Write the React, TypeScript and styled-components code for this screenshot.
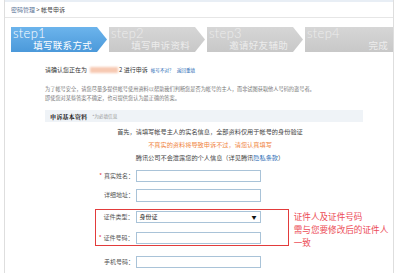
import styled, { createGlobalStyle } from "styled-components";

const GlobalStyle = createGlobalStyle`
  html, body {
    margin: 0;
    padding: 0;
    background: #fff;
  }
  body {
    width: 400px;
    height: 273px;
    overflow: hidden;
    font-family: "Noto Sans CJK SC", "Liberation Sans", sans-serif;
    color: #333;
  }
`;

const Frame = styled.div`
  margin-left: 4px;
  width: 388px;
  height: 273px;
  border-left: 1px solid #dedede;
  border-right: 1px solid #dedede;
  display: flex;
  flex-direction: column;
`;

const TopBar = styled.div`
  height: 2px;
  background: #e8eef5;
`;

const Breadcrumb = styled.div`
  height: 15px;
  line-height: 15px;
  padding-left: 6px;
  font-size: 6px;
  color: #444;
  border-bottom: 1px solid #e6e6e6;
`;

const Crumb = styled.span`
  color: #5a7397;
`;

const Steps = styled.div`
  display: flex;
  gap: 2px;
  margin-top: 9px;
  padding-left: 6px;
`;

const Step = styled.div<{ $active?: boolean; $last?: boolean }>`
  box-sizing: border-box;
  width: ${(p) => (p.$last ? 88 : 96)}px;
  height: 25px;
  padding: 0 ${(p) => (p.$last ? 5 : 15)}px 1px 2px;
  display: flex;
  flex-direction: column;
  background: ${(p) =>
    p.$active
      ? "linear-gradient(#6cb4ec, #4b99da)"
      : "linear-gradient(#d6d6d6, #c8c8c8)"};
  clip-path: ${(p) =>
    p.$last
      ? "none"
      : "polygon(0 0, calc(100% - 10px) 0, 100% 50%, calc(100% - 10px) 100%, 0 100%)"};
  color: ${(p) => (p.$active ? "#fff" : "#ececec")};
`;

const StepNum = styled.div`
  font-family: Lato, "Liberation Sans", sans-serif;
  font-weight: 300;
  font-size: 13px;
  line-height: 13px;
  letter-spacing: 0.3px;
`;

const StepLabel = styled.div`
  margin-top: auto;
  align-self: flex-end;
  font-size: 9.5px;
  line-height: 11px;
  letter-spacing: 0.3px;
`;

const Content = styled.div`
  padding-left: 40px;
  display: flex;
  flex-direction: column;
`;

const Confirm = styled.div`
  margin-top: 14px;
  font-size: 6px;
  line-height: 8px;
  color: #333;
  display: flex;
  align-items: center;
`;

const Masked = styled.span`
  display: inline-block;
  width: 28px;
  height: 6px;
  margin: 0 1px 0 3px;
  background: #f7c9b2;
  filter: blur(1px);
`;

const SmallLink = styled.a`
  font-size: 4.6px;
  color: #2c6db5;
  margin-left: 3px;
  text-decoration: none;
`;

const Para = styled.p`
  margin: 9.5px 0 0;
  width: 276px;
  font-size: 5.2px;
  line-height: 9px;
  color: #777;
`;

const SectionHead = styled.div`
  margin-top: 8.5px;
  width: 318px;
  height: 12px;
  background: #eff3f7;
  display: flex;
  align-items: center;
  padding-left: 5px;
  box-sizing: border-box;
`;

const SectionTitle = styled.span`
  font-family: "Noto Serif CJK SC", "Noto Sans CJK SC", serif;
  font-weight: 700;
  font-size: 6.2px;
  color: #222;
`;

const Required = styled.span`
  font-size: 4.6px;
  color: #999;
  margin-left: 5px;
`;

const Notices = styled.div`
  margin-top: 2.5px;
  width: 330px;
  display: flex;
  flex-direction: column;
  align-items: center;
`;

const Notice = styled.div<{ $tone?: "warn" }>`
  font-size: 6.2px;
  line-height: 13px;
  color: ${(p) => (p.$tone === "warn" ? "#f08440" : "#444")};
`;

const Link = styled.span`
  color: #2c6db5;
`;

const Form = styled.div`
  margin-top: 6px;
  display: flex;
  flex-direction: column;
  gap: 7px;
`;

const Field = styled.div<{ $labelWidth: number }>`
  display: flex;
  align-items: center;
  height: 12.5px;
  & > label {
    width: ${(p) => p.$labelWidth}px;
  }
`;

const Label = styled.label`
  box-sizing: border-box;
  padding-right: 2px;
  text-align: right;
  font-size: 6px;
  line-height: 8px;
  color: #555;
  white-space: nowrap;
`;

const Star = styled.span`
  color: #e4393c;
  margin-right: 2px;
`;

const Input = styled.div`
  box-sizing: border-box;
  width: 125px;
  height: 12.5px;
  border: 1px solid #a9c3d8;
  background: #fff;
`;

const Select = styled(Input)`
  display: flex;
  align-items: center;
  justify-content: space-between;
  padding: 0 3px 0 3px;
  font-size: 6px;
  color: #222;
`;

const Caret = styled.span`
  font-size: 5px;
  color: #111;
`;

const HighlightRow = styled.div`
  display: flex;
  align-items: flex-start;
  margin-left: 50px;
`;

const HighlightBox = styled.div`
  box-sizing: border-box;
  width: 195px;
  padding: 1px 0 1px;
  border: 1.5px solid #e23b3b;
  display: flex;
  flex-direction: column;
  gap: 8.5px;
`;

const Annotation = styled.div`
  margin-left: 5px;
  margin-top: 1px;
  font-size: 8.6px;
  line-height: 13px;
  color: #ec4a55;
  width: 100px;
`;

const fields = {
  plainLabel: 91,
  boxLabel: 39.5,
};

export default function App() {
  return (
    <>
      <GlobalStyle />
      <Frame>
        <TopBar />
        <Breadcrumb>
          <Crumb>密码管理</Crumb> &gt; 帐号申诉
        </Breadcrumb>
        <Steps>
          <Step $active>
            <StepNum>step1</StepNum>
            <StepLabel>填写联系方式</StepLabel>
          </Step>
          <Step>
            <StepNum>step2</StepNum>
            <StepLabel>填写申诉资料</StepLabel>
          </Step>
          <Step>
            <StepNum>step3</StepNum>
            <StepLabel>邀请好友辅助</StepLabel>
          </Step>
          <Step $last>
            <StepNum>step4</StepNum>
            <StepLabel>完成</StepLabel>
          </Step>
        </Steps>
        <Content>
          <Confirm>
            请确认您正在为
            <Masked />
            2 进行申诉
            <SmallLink>帐号不对？</SmallLink>
            <SmallLink>返回重填</SmallLink>
          </Confirm>
          <Para>
            为了帐号安全，请您尽量多提供帐号使用资料以帮助我们判断您是否为帐号的主人，而非试图获取他人号码的盗号者。
            即使您对某些答案不确定，也可提供您认为最正确的答案。
          </Para>
          <SectionHead>
            <SectionTitle>申诉基本资料</SectionTitle>
            <Required>*为必填信息</Required>
          </SectionHead>
          <Notices>
            <Notice>首先，请填写帐号主人的实名信息，全部资料仅用于帐号的身份验证</Notice>
            <Notice $tone="warn">不真实的资料将导致申诉不过，请您认真填写</Notice>
            <Notice>
              腾讯公司不会泄露您的个人信息（详见腾讯<Link>隐私条款</Link>）
            </Notice>
          </Notices>
          <Form>
            <Field $labelWidth={fields.plainLabel}>
              <Label>
                <Star>*</Star>真实姓名：
              </Label>
              <Input />
            </Field>
            <Field $labelWidth={fields.plainLabel}>
              <Label>详细地址：</Label>
              <Input />
            </Field>
            <HighlightRow>
              <HighlightBox>
                <Field $labelWidth={fields.boxLabel}>
                  <Label>证件类型：</Label>
                  <Select>
                    身份证
                    <Caret>▼</Caret>
                  </Select>
                </Field>
                <Field $labelWidth={fields.boxLabel}>
                  <Label>
                    <Star>*</Star>证件号码：
                  </Label>
                  <Input />
                </Field>
              </HighlightBox>
              <Annotation>
                证件人及证件号码
                <br />
                需与您要修改后的证件人
                <br />
                一致
              </Annotation>
            </HighlightRow>
            <Field $labelWidth={fields.plainLabel}>
              <Label>手机号码：</Label>
              <Input />
            </Field>
          </Form>
        </Content>
      </Frame>
    </>
  );
}
